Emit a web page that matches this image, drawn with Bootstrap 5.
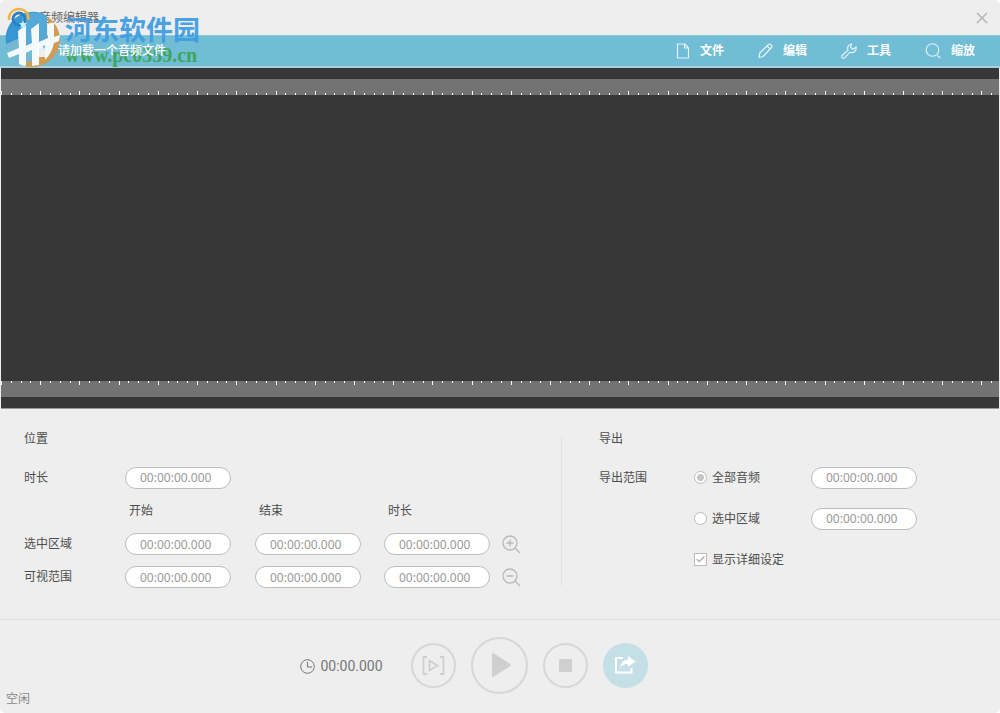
<!DOCTYPE html>
<html lang="zh-CN">
<head>
<meta charset="utf-8">
<meta name="viewport" content="width=device-width, initial-scale=1">
<title>音频编辑器</title>
<link href="https://cdn.jsdelivr.net/npm/bootstrap@5.3.0/dist/css/bootstrap.min.css" rel="stylesheet">
<style>
body{font-family:"Open Sans","Noto Sans CJK SC",sans-serif;font-size:12px;line-height:16px;color:#4d4d4d;background:#fff}
svg{display:block;fill:none;flex:none}
.app{min-height:100vh;background:#eee;border-radius:5px;overflow:hidden}
.titlebar{height:35px;padding:0 12px 0 8px}
.app-name{color:#666}
.toolbar{height:33px;padding:0 25px 0 40px;background:#71bdd5;border-top:1px solid #8bc6d9;border-bottom:2px solid #a9cfdb;color:#fff;font-weight:500}
.file-name{z-index:2}
.tools{gap:34px}
.tool{padding:0;border:0;color:#fff;font-size:12px;line-height:16px;font-weight:700;gap:10px}
.tool:hover{color:#fff}
.wave{margin:0 1px;padding:11px 0;background:#373738;border-bottom:1px solid #999}
.ruler{height:16px;background:#737373;overflow:hidden}
.ruler svg{width:100%;height:16px;stroke:#fff}
.panels{display:grid;grid-template-columns:562fr 438fr;padding:28px 0 33px;border-bottom:1px solid #dcdcdc}
.position{padding-left:24px;border-right:1px solid #e1e1e1;height:149px}
.pos-grid{display:grid;grid-template-columns:101fr 130fr 129fr 118fr 59fr;grid-template-rows:41px 26px 40px 26px;align-items:center}
.export{padding-left:37px}
.exp-grid{display:grid;grid-template-columns:95fr 117fr 189fr;grid-template-rows:41px 41px 41px;align-items:center}
.heading{font-size:12px;line-height:16px;margin:-6px 0 10px;font-weight:400}
.time{width:106px;height:22px;padding:0 8px 0 14px;border:1px solid #bdbdbd;border-radius:11px;font-family:"Noto Sans",sans-serif;font-size:12px;line-height:20px;color:#999;background:#fff}
.pick{gap:5px}
.pick .form-check-input{margin:0;width:13px;height:13px;border:1px solid #bbb;background-color:#fff;flex:none;opacity:1;box-shadow:none}
.pick [type=radio]:checked{background-image:radial-gradient(circle,#c4c4c4 3px,transparent 4px)}
.pick [type=checkbox]{border-radius:0}
.pick [type=checkbox]:checked{background-image:url("data:image/svg+xml,%3Csvg xmlns='http://www.w3.org/2000/svg' viewBox='0 0 13 13'%3E%3Cpath d='M2 6l3 3 6-6' fill='none' stroke='%23aaa' stroke-width='1.5'/%3E%3C/svg%3E")}
.plain{padding:0;border:0}
.transport{gap:15px;height:90px;padding-right:52px}
.clock{font-family:Roboto,sans-serif;font-size:14px;line-height:18px;color:#777;gap:5px;margin-right:13px;padding-top:2px}
.round{width:45px;height:45px;padding:0;border:2px solid #d7d7d7;border-radius:50%;color:#cfcfcf}
.round-lg{width:57px;height:57px}
.share{background:#c5dfe7;border-color:#c5dfe7;color:#fff}
.status{padding:0 6px 6px;margin-top:-19px;color:#888}
.stamp{left:4px;top:5px;pointer-events:none}
.stamp-name{font-size:27px;line-height:30px;font-weight:700;color:#3d9ce3;font-family:"Noto Sans CJK SC",sans-serif}
.stamp-url{font-family:"Liberation Serif",serif;font-size:20px;line-height:22px;font-weight:700;color:#3aa552}
.stamp-text{padding:9px 0 0 3px;opacity:.92}
</style>
</head>
<body>
<div class="app d-flex flex-column position-relative">
<header class="titlebar d-flex align-items-center justify-content-between">
<div class="d-flex align-items-center gap-2"><svg width="23" height="23" viewBox="0 0 23 23"></svg><span class="app-name">音频编辑器</span></div>
<button class="btn plain" aria-label="关闭"><svg width="12" height="12" viewBox="0 0 12 12" stroke="#b5b5b5" stroke-width="1.5"><path d="M1 1l10 10M11 1L1 11"/></svg></button>
</header>
<nav class="toolbar d-flex align-items-center justify-content-between">
<div class="file-name d-flex align-items-center gap-2 position-relative"><svg width="10" height="14" viewBox="0 0 10 14"></svg><span>请加载一个音频文件</span></div>
<div class="tools d-flex">
<button class="btn tool d-flex align-items-center"><svg width="14" height="16" viewBox="0 0 14 16" stroke="#e3f4f9" stroke-width="1.2"><path d="M1.500 1H9l3.500 4v10h-11zM8.500 1v4h4"/></svg>文件</button>
<button class="btn tool d-flex align-items-center"><svg width="15" height="16" viewBox="0 0 15 16" stroke="#e3f4f9" stroke-width="1.2" stroke-linejoin="round"><path d="M1 14.500l.8-4.500L10.500 1.500q1-.8 2 0l1 1q.9 1 0 2L5 13.500zM9 3l3.500 3"/></svg>编辑</button>
<button class="btn tool d-flex align-items-center"><svg width="16" height="16" viewBox="0 0 16 16" stroke="#e3f4f9" stroke-width="1.2"><path d="M10.500 1A4.300 4.300 0 0 0 7 7L1.200 12.500a1.600 1.600 0 0 0 2.300 2.300L9 9.200a4.400 4.400 0 0 0 6-5.200l-3 2.500-2.500-2.200z"/></svg>工具</button>
<button class="btn tool d-flex align-items-center"><svg width="16" height="16" viewBox="0 0 16 16" stroke="#e3f4f9" stroke-width="1.1"><circle cx="7.500" cy="7" r="6.300"/><path d="M12.500 12.500l3 2.500"/></svg>缩放</button>
</div>
</nav>
<main class="flex-grow-1 d-flex flex-column">
<section class="wave flex-grow-1 d-flex flex-column justify-content-between" aria-label="波形">
<div class="ruler"><svg data-edge="bottom"></svg></div>
<div class="ruler"><svg data-edge="top"></svg></div>
</section>
<section class="panels">
<div class="position">
<h2 class="heading">位置</h2>
<div class="pos-grid">
<label for="total">时长</label><input class="time" id="total" value="00:00:00.000"><span></span><span></span><span></span>
<span></span><span class="ps-1">开始</span><span class="ps-1">结束</span><span class="ps-1">时长</span><span></span>
<label for="selStart">选中区域</label><input class="time" id="selStart" value="00:00:00.000"><input class="time" aria-label="选中区域结束" value="00:00:00.000"><input class="time" aria-label="选中区域时长" value="00:00:00.000">
<button class="btn plain me-auto" aria-label="放大"><svg width="19" height="19" viewBox="0 0 19 19" stroke="#b9b9b9" stroke-width="1.300"><circle cx="8" cy="8" r="7"/><path d="M13 13l5 5M4.500 8h7M8 4.500v7"/></svg></button>
<label for="viewStart">可视范围</label><input class="time" id="viewStart" value="00:00:00.000"><input class="time" aria-label="可视范围结束" value="00:00:00.000"><input class="time" aria-label="可视范围时长" value="00:00:00.000">
<button class="btn plain me-auto" aria-label="缩小"><svg width="19" height="19" viewBox="0 0 19 19" stroke="#b9b9b9" stroke-width="1.300"><circle cx="8" cy="8" r="7"/><path d="M13 13l5 5M4.500 8h7"/></svg></button>
</div>
</div>
<div class="export">
<h2 class="heading">导出</h2>
<div class="exp-grid">
<span>导出范围</span><label class="pick d-flex align-items-center"><input class="form-check-input" type="radio" name="range" checked>全部音频</label><input class="time" aria-label="全部音频时长" value="00:00:00.000">
<span></span><label class="pick d-flex align-items-center"><input class="form-check-input" type="radio" name="range">选中区域</label><input class="time" aria-label="选中区域时长" value="00:00:00.000">
<span></span><label class="pick d-flex align-items-center"><input class="form-check-input" type="checkbox" checked>显示详细设定</label>
</div>
</div>
</section>
</main>
<footer>
<div class="transport d-flex align-items-center justify-content-center">
<div class="clock d-flex align-items-center"><svg width="15" height="15" viewBox="0 0 15 15" stroke="#777"><circle cx="7.500" cy="7.500" r="6.800"/><path d="M7.500 3v5H12"/></svg>00:00.000</div>
<button class="btn round d-flex align-items-center justify-content-center" aria-label="播放选区"><svg width="23" height="19" viewBox="0 0 23 19" stroke="#cfcfcf" stroke-width="1.800"><path d="M5 1H1.500v17H5M18 1h3.500v17H18M7.500 4.500v10l8-5z"/></svg></button>
<button class="btn round round-lg d-flex align-items-center justify-content-center" aria-label="播放"><svg class="ms-1" width="20" height="24" viewBox="0 0 20 24"><path d="M2 1l17 11L2 23z" fill="#cfcfcf" stroke="#cfcfcf" stroke-width="2" stroke-linejoin="round"/></svg></button>
<button class="btn round d-flex align-items-center justify-content-center" aria-label="停止"><svg width="13" height="13" viewBox="0 0 13 13"><rect width="13" height="13" rx="1" fill="#cfcfcf"/></svg></button>
<button class="btn round share d-flex align-items-center justify-content-center" aria-label="导出"><svg width="22" height="18" viewBox="0 0 22 18"><path d="M9 2H2v14.500h15.500V12" stroke="#fff" stroke-width="2"/><path d="M14 0l7.500 5.500L14 11V8q-5-.5-8 4 1-8 8-8.500z" fill="#fff"/></svg></button>
</div>
<div class="status">空闲</div>
</footer>
<div class="stamp position-absolute d-flex align-items-start">
<svg width="58" height="64" viewBox="4 5 58 64">
<path d="M8 50A27 27 0 0 1 47 16L34 23 19 30 18 43z" fill="#3597d3"/>
<path d="M22 16q12-7 25 0v28q-14 5-25 10z" fill="#55a9d8"/>
<path d="M48 17q13 10 12 25-2 17-20 24-14 4-24-5 17 2 29-13l3-13z" fill="#cf9c52"/>
<path d="M6 44l14-6v7L8 52zM14 58q13 3 27-8l7-7-4 9q-12 13-28 10z" fill="#77b6d4"/>
<path d="M18 31l8-6v41q-4 0-7-2V54L9 58l-2-5 12-5zM31 29l8-6v19l9-4V24q3-2 6-1v14l6-2-1 6-5 2q-2 10-9 17V45l-6 3v17l-7 1V50l-9 4v-7l9-4z" fill="#f4f9fb"/>
<path d="M9 20V17a10 10 0 0 1 19-2v5" stroke="#f2b23f" stroke-width="2.500"/>
<circle cx="19" cy="19" r="6" stroke="#2b80c5" stroke-width="3"/>
<path d="M23 20l1 3 3 .3-2.300 2 .8 3-2.500-1.600-2.600 1.600.8-3-2.300-2 3-.3z" fill="#c9effa"/>
<path d="M37 46h5l3 3v8h-8z" fill="#fff" opacity=".8"/>
</svg>
<div class="stamp-text"><div class="stamp-name">河东软件园</div><div class="stamp-url">www.pc0359.cn</div></div>
</div>
</div>
<script src="https://cdn.jsdelivr.net/npm/bootstrap@5.3.0/dist/js/bootstrap.bundle.min.js"></script>
<script>
// Ruler scale: 51 minor divisions per 500 units, every fourth one is long.
function drawRulers(){
  document.querySelectorAll('.ruler svg').forEach(function(s){
    var d='',w=s.clientWidth,top=s.dataset.edge==='top';
    for(var i=0;i*500/51<w;i++){
      var x=Math.round(i*500/51)+.5,h=i%4?2:4;
      d+='M'+x+' '+(top?0:16)+'v'+(top?h:-h);
    }
    s.innerHTML='<path d="'+d+'"/>';
  });
}
drawRulers();
addEventListener('resize',drawRulers);
</script>
</body>
</html>
